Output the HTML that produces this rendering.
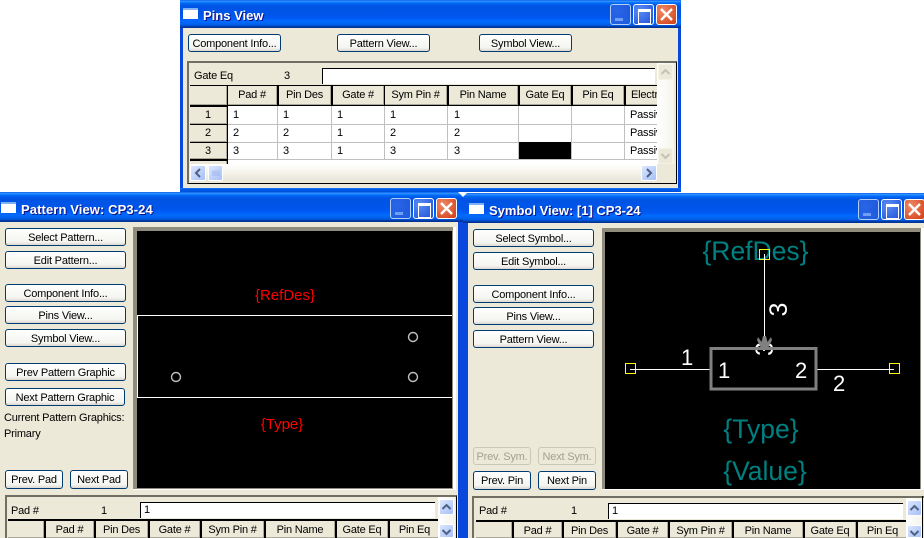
<!DOCTYPE html>
<html><head><meta charset="utf-8"><style>
html,body{margin:0;padding:0;background:#fff;width:924px;height:538px;overflow:hidden}
body{position:relative;font:11px/13px "Liberation Sans",sans-serif;color:#000;letter-spacing:-.2px}
svg{letter-spacing:0}
div{position:absolute;box-sizing:border-box;white-space:nowrap}
.fr{background:#0848dc}
.tb{background:linear-gradient(180deg,#0058ee 0,#3593ff 4%,#288eff 6%,#127dff 8%,#036ffc 10%,#0262ee 14%,#0057e5 20%,#0054e3 24%,#0055eb 56%,#005bf5 66%,#026afe 76%,#0062ef 86%,#0052d6 92%,#0040ab 94%,#003092 100%)}
.cl{background:#ece9d8}
.tt{color:#fff;font:bold 13px/16px "Liberation Sans",sans-serif;letter-spacing:0;text-shadow:1px 1px 0 #0f1089}
.ic{width:15px;height:11px;background:#fff;border-top:2px solid #7fb2f0}
.b{height:18px;border:1px solid #003c74;border-radius:3px;background:linear-gradient(#fff,#f4f4f0 80%,#dcd8ce);text-align:center;line-height:18px}
.d{border-color:#c9c7ba;color:#a1a192;background:#ece9d8}
.h{background:#ece9d8;text-align:center;line-height:19px;border-right:1px solid #aca899;border-bottom:1px solid #aca899;overflow:hidden}
.t{line-height:17px}
.w{background:#fff}
.v{background:#c0c0c0;width:1px}
.r{background:#c0c0c0;height:1px}
.bk{background:#000}
.wm,.wx,.wc{width:21px;height:21px;border:1px solid #fff;border-radius:3px}
.wm{background:radial-gradient(circle at 30% 30%,#3a6ee8,#2a55d0);opacity:.7}
.wx{background:radial-gradient(circle at 30% 30%,#5b8cf0,#1e50dc)}
.wc{background:radial-gradient(circle at 30% 30%,#ee8a68,#d23c12)}
.wm i{position:absolute;left:4px;top:13px;width:8px;height:3px;background:#9fb8f2}
.wx i{position:absolute;left:4px;top:4px;width:11px;height:11px;border:1px solid #fff;border-top:3px solid #fff}
.sb{width:15px;height:16px;border:1px solid #fff;border-radius:2px;background:linear-gradient(135deg,#dbe6fe,#a6c0f6);text-align:center}
.sd{background:#ece9d8;border-color:#f4f2e8}
</style></head><body>

<!-- PINS VIEW -->
<div class="fr" style="left:180px;top:0;width:501px;height:191px"></div>
<div class="tb" style="left:180px;top:0;width:501px;height:28px"></div>
<div class="tb" style="left:180px;top:188px;width:501px;height:4px"></div>
<div class="ic" style="left:183px;top:8px"></div>
<div class="tt" style="left:203px;top:8px">Pins View</div>
<div class="wm" style="left:610px;top:4px"><i></i></div>
<div class="wx" style="left:633px;top:4px"><i></i></div>
<div class="wc" style="left:656px;top:4px"><svg width="19" height="19" style="position:absolute;left:0;top:0"><path d="M4 4L15 15M15 4L4 15" stroke="#fff" stroke-width="2.4"/></svg></div>
<div class="cl" style="left:183px;top:28px;width:495px;height:160px"></div>
<div class="b" style="left:188px;top:34px;width:93px">Component Info...</div>
<div class="b" style="left:337px;top:34px;width:93px">Pattern View...</div>
<div class="b" style="left:479px;top:34px;width:93px">Symbol View...</div>
<div style="left:187px;top:61px;width:490px;height:123px;border:1px solid #000;border-top:2px solid #716f64;border-left:2px solid #716f64;background:#ece9d8"></div>
<div style="left:194px;top:70px">Gate Eq</div>
<div style="left:284px;top:70px">3</div>
<div class="w" style="left:322px;top:68px;width:333px;height:16px;border-left:1px solid #000;border-top:1px solid #000"></div>
<div class="bk" style="left:190px;top:85px;width:467px;height:21px"></div>
<div class="h" style="left:190px;top:86px;width:37px;height:19px"></div>
<div class="h" style="left:228px;top:86px;width:49px;height:19px">Pad #</div>
<div class="h" style="left:279px;top:86px;width:52px;height:19px">Pin Des</div>
<div class="h" style="left:333px;top:86px;width:51px;height:19px">Gate #</div>
<div class="h" style="left:385px;top:86px;width:62px;height:19px">Sym Pin #</div>
<div class="h" style="left:449px;top:86px;width:69px;height:19px">Pin Name</div>
<div class="h" style="left:520px;top:86px;width:51px;height:19px">Gate Eq</div>
<div class="h" style="left:573px;top:86px;width:51px;height:19px">Pin Eq</div>
<div class="h" style="left:626px;top:86px;width:31px;height:19px;text-align:left;padding-left:5px;border-right:0">Electrical</div>
<div class="w" style="left:228px;top:106px;width:429px;height:58px"></div>
<div class="r" style="left:228px;top:124px;width:429px"></div>
<div class="r" style="left:228px;top:142px;width:429px"></div>
<div class="r" style="left:228px;top:159px;width:429px"></div>
<div class="v" style="left:277px;top:106px;height:54px"></div>
<div class="v" style="left:331px;top:106px;height:54px"></div>
<div class="v" style="left:384px;top:106px;height:54px"></div>
<div class="v" style="left:447px;top:106px;height:54px"></div>
<div class="v" style="left:518px;top:106px;height:54px"></div>
<div class="v" style="left:571px;top:106px;height:54px"></div>
<div class="v" style="left:624px;top:106px;height:54px"></div>
<div class="bk" style="left:227px;top:85px;width:1px;height:79px"></div>
<div class="bk" style="left:190px;top:105px;width:37px;height:59px"></div>
<div class="h" style="left:190px;top:107px;width:37px;height:17px;line-height:16px">1</div>
<div class="h" style="left:190px;top:125px;width:37px;height:17px;line-height:17px">2</div>
<div class="h" style="left:190px;top:143px;width:37px;height:16px;line-height:16px">3</div>
<div class="h" style="left:190px;top:161px;width:37px;height:3px;border-bottom:0"></div>
<div class="t" style="left:233px;top:107px">1</div><div class="t" style="left:283px;top:107px">1</div><div class="t" style="left:337px;top:107px">1</div><div class="t" style="left:390px;top:107px">1</div><div class="t" style="left:454px;top:107px">1</div><div class="t" style="left:630px;top:107px;width:27px;overflow:hidden">Passive</div>
<div class="t" style="left:233px;top:125px">2</div><div class="t" style="left:283px;top:125px">2</div><div class="t" style="left:337px;top:125px">1</div><div class="t" style="left:390px;top:125px">2</div><div class="t" style="left:454px;top:125px">2</div><div class="t" style="left:630px;top:125px;width:27px;overflow:hidden">Passive</div>
<div class="t" style="left:233px;top:143px">3</div><div class="t" style="left:283px;top:143px">3</div><div class="t" style="left:337px;top:143px">1</div><div class="t" style="left:390px;top:143px">3</div><div class="t" style="left:454px;top:143px">3</div><div class="t" style="left:630px;top:143px;width:27px;overflow:hidden">Passive</div>
<div class="bk" style="left:519px;top:142px;width:52px;height:17px"></div>
<div style="left:190px;top:164px;width:467px;height:17px;background:linear-gradient(#fff,#f3f1e7 60%,#e8e6d8)"></div>
<div class="sb" style="left:190px;top:165px;height:16px;width:16px"><svg width="14" height="14" style="position:absolute;left:0;top:0"><path d="M9 3L5 7L9 11" fill="none" stroke="#4d6185" stroke-width="2"/></svg></div>
<div class="sb" style="left:208px;top:165px;height:16px;width:15px"><svg width="13" height="14" style="position:absolute;left:0;top:0"><path d="M4 4.500V10M6 4.500V10M8 4.500V10M10 4.500V10" stroke="#a0b4e8" stroke-width="1"/></svg></div>
<div class="sb" style="left:641px;top:165px;height:16px;width:16px"><svg width="14" height="14" style="position:absolute;left:0;top:0"><path d="M5 3L9 7L5 11" fill="none" stroke="#4d6185" stroke-width="2"/></svg></div>
<div style="left:657px;top:63px;width:17px;height:101px;background:linear-gradient(90deg,#fff,#f5f4ec)"></div>
<div class="sb sd" style="left:658px;top:64px"><svg width="13" height="14" style="position:absolute;left:0;top:0"><path d="M2.500 9L6.500 5L10.500 9" fill="none" stroke="#c4c2b3" stroke-width="2"/></svg></div>
<div class="sb sd" style="left:658px;top:148px"><svg width="13" height="14" style="position:absolute;left:0;top:0"><path d="M2.500 5L6.500 9L10.500 5" fill="none" stroke="#c4c2b3" stroke-width="2"/></svg></div>

<!-- PATTERN VIEW -->
<div class="fr" style="left:0;top:192px;width:463px;height:346px"></div>
<div class="tb" style="left:0;top:192px;width:463px;height:30px"></div>
<div class="ic" style="left:1px;top:202px"></div>
<div class="tt" style="left:21px;top:202px;letter-spacing:.1px">Pattern View: CP3-24</div>
<div class="wm" style="left:390px;top:198px"><i></i></div>
<div class="wx" style="left:413px;top:198px"><i></i></div>
<div class="wc" style="left:436px;top:198px"><svg width="19" height="19" style="position:absolute;left:0;top:0"><path d="M4 4L15 15M15 4L4 15" stroke="#fff" stroke-width="2.4"/></svg></div>
<div class="cl" style="left:0;top:222px;width:458px;height:316px"></div>
<div class="b" style="left:5px;top:228px;width:121px">Select Pattern...</div>
<div class="b" style="left:5px;top:251px;width:121px">Edit Pattern...</div>
<div class="b" style="left:5px;top:284px;width:121px">Component Info...</div>
<div class="b" style="left:5px;top:306px;width:121px">Pins View...</div>
<div class="b" style="left:5px;top:329px;width:121px">Symbol View...</div>
<div class="b" style="left:5px;top:363px;width:121px">Prev Pattern Graphic</div>
<div class="b" style="left:5px;top:388px;width:120px">Next Pattern Graphic</div>
<div style="left:4px;top:412px">Current Pattern Graphics:</div>
<div style="left:4px;top:428px">Primary</div>
<div class="b" style="left:5px;top:470px;width:58px;height:19px">Prev. Pad</div>
<div class="b" style="left:70px;top:470px;width:58px;height:19px">Next Pad</div>
<div style="left:133px;top:227px;width:323px;height:263px;background:#fff"></div>
<div style="left:133px;top:227px;width:320px;height:262px;background:#8f8c7d"></div>
<div class="bk" style="left:137px;top:231px;width:315px;height:257px"></div>
<svg width="924" height="538" style="position:absolute;left:0;top:0">
<rect x="137.500" y="315.500" width="320" height="82" fill="none" stroke="#fff"/>
<rect x="452" y="300" width="6" height="110" fill="#ece9d8"/>
<rect x="452" y="300" width="1" height="110" fill="#8f8c7d"/>
<rect x="453" y="300" width="3" height="110" fill="#fff"/>
<circle cx="176" cy="377" r="4.500" fill="none" stroke="#c0c0c0" stroke-width="1.400"/>
<circle cx="413" cy="337" r="4.500" fill="none" stroke="#c0c0c0" stroke-width="1.400"/>
<circle cx="413" cy="377" r="4.500" fill="none" stroke="#c0c0c0" stroke-width="1.400"/>
<text x="285" y="300" text-anchor="middle" fill="#f00" font-family="Liberation Sans" font-size="15">{RefDes}</text>
<text x="282" y="429" text-anchor="middle" fill="#f00" font-family="Liberation Sans" font-size="15">{Type}</text>
</svg>
<div style="left:5px;top:495px;width:452px;height:43px;border:1px solid #000;border-top:2px solid #716f64;border-left:2px solid #716f64;border-bottom:0;background:#ece9d8"></div>
<div style="left:11px;top:505px">Pad #</div>
<div style="left:101px;top:505px">1</div>
<div class="w" style="left:140px;top:502px;width:295px;height:16px;border-left:1px solid #000;border-top:1px solid #000;padding-left:3px;line-height:15px">1</div>
<div class="bk" style="left:8px;top:519px;width:431px;height:19px"></div>
<div class="h" style="left:8px;top:521px;width:36px;height:17px"></div>
<div class="h" style="left:46px;top:521px;width:48px;height:17px">Pad #</div>
<div class="h" style="left:96px;top:521px;width:52px;height:17px">Pin Des</div>
<div class="h" style="left:150px;top:521px;width:50px;height:17px">Gate #</div>
<div class="h" style="left:202px;top:521px;width:62px;height:17px">Sym Pin #</div>
<div class="h" style="left:266px;top:521px;width:69px;height:17px">Pin Name</div>
<div class="h" style="left:337px;top:521px;width:51px;height:17px">Gate Eq</div>
<div class="h" style="left:390px;top:521px;width:49px;height:17px;border-right:0">Pin Eq</div>
<div style="left:438px;top:497px;width:17px;height:41px;background:linear-gradient(90deg,#fff,#f5f4ec)"></div>
<div class="sb" style="left:439px;top:499px"><svg width="13" height="14" style="position:absolute;left:0;top:0"><path d="M2.500 9L6.500 5L10.500 9" fill="none" stroke="#4d6185" stroke-width="2"/></svg></div>
<div class="sb" style="left:439px;top:524px;height:14px"><svg width="13" height="14" style="position:absolute;left:0;top:0"><path d="M2.500 5L6.500 9L10.500 5" fill="none" stroke="#4d6185" stroke-width="2"/></svg></div>

<!-- SYMBOL VIEW -->
<div class="fr" style="left:463px;top:193px;width:461px;height:345px"></div>
<div class="tb" style="left:463px;top:193px;width:461px;height:30px"></div>
<svg width="12" height="6" style="position:absolute;left:458px;top:192px"><path d="M0 0H10L5 5Z" fill="#fff"/></svg>
<div class="ic" style="left:469px;top:203px"></div>
<div class="tt" style="left:489px;top:203px">Symbol View: [1] CP3-24</div>
<div class="wm" style="left:858px;top:199px"><i></i></div>
<div class="wx" style="left:881px;top:199px"><i></i></div>
<div class="wc" style="left:904px;top:199px"><svg width="19" height="19" style="position:absolute;left:0;top:0"><path d="M4 4L15 15M15 4L4 15" stroke="#fff" stroke-width="2.4"/></svg></div>
<div class="cl" style="left:468px;top:223px;width:456px;height:315px"></div>
<div class="b" style="left:473px;top:229px;width:121px">Select Symbol...</div>
<div class="b" style="left:473px;top:252px;width:121px">Edit Symbol...</div>
<div class="b" style="left:473px;top:285px;width:121px">Component Info...</div>
<div class="b" style="left:473px;top:307px;width:121px">Pins View...</div>
<div class="b" style="left:473px;top:330px;width:121px">Pattern View...</div>
<div class="b d" style="left:473px;top:447px;width:58px">Prev. Sym.</div>
<div class="b d" style="left:538px;top:447px;width:58px">Next Sym.</div>
<div class="b" style="left:473px;top:471px;width:58px;height:19px">Prev. Pin</div>
<div class="b" style="left:538px;top:471px;width:58px;height:19px">Next Pin</div>
<div style="left:602px;top:228px;width:322px;height:262px;background:#fff"></div>
<div style="left:602px;top:228px;width:319px;height:261px;background:#8f8c7d"></div>
<div class="bk" style="left:605px;top:232px;width:315px;height:257px"></div>
<svg width="924" height="538" style="position:absolute;left:0;top:0">
<text x="755.500" y="260" text-anchor="middle" fill="#008080" font-family="Liberation Sans" font-size="26.500">{RefDes}</text>
<text x="761" y="438" text-anchor="middle" fill="#008080" font-family="Liberation Sans" font-size="26.500">{Type}</text>
<text x="765" y="480" text-anchor="middle" fill="#008080" font-family="Liberation Sans" font-size="26.500">{Value}</text>
<rect x="759.500" y="249.500" width="10" height="10" fill="none" stroke="#ff0"/>
<rect x="625.500" y="363.500" width="10" height="10" fill="none" stroke="#ff0"/>
<rect x="889.500" y="363.500" width="10" height="10" fill="none" stroke="#ff0"/>
<path d="M764.500 254V337M630 369.500H710M817 369.500H894" stroke="#fff" fill="none"/>
<text transform="translate(787,316.500) rotate(-90)" fill="#fff" font-family="Liberation Sans" font-size="25">3</text>
<text transform="translate(773,356) rotate(-90)" fill="#fff" font-family="Liberation Sans" font-size="25">3</text>
<rect x="711" y="348.500" width="105" height="40.500" fill="none" stroke="#808080" stroke-width="3"/>
<path d="M758 337L761.500 342L763 336H766L767.500 342L771 337L772 340L768.500 347H760.500L757 340Z" fill="#808080"/>
<text x="681" y="365" fill="#fff" font-family="Liberation Sans" font-size="22">1</text>
<text x="718" y="378" fill="#fff" font-family="Liberation Sans" font-size="22">1</text>
<text x="795" y="378" fill="#fff" font-family="Liberation Sans" font-size="22">2</text>
<text x="833" y="391" fill="#fff" font-family="Liberation Sans" font-size="22">2</text>
</svg>
<div style="left:472px;top:496px;width:452px;height:42px;border-top:2px solid #716f64;border-left:2px solid #716f64;background:#ece9d8"></div>
<div style="left:479px;top:505px">Pad #</div>
<div style="left:571px;top:505px">1</div>
<div class="w" style="left:608px;top:503px;width:295px;height:16px;border-left:1px solid #000;border-top:1px solid #000;padding-left:3px;line-height:15px">1</div>
<div class="bk" style="left:476px;top:520px;width:431px;height:18px"></div>
<div class="h" style="left:476px;top:522px;width:36px;height:16px"></div>
<div class="h" style="left:514px;top:522px;width:48px;height:16px">Pad #</div>
<div class="h" style="left:564px;top:522px;width:52px;height:16px">Pin Des</div>
<div class="h" style="left:618px;top:522px;width:50px;height:16px">Gate #</div>
<div class="h" style="left:670px;top:522px;width:62px;height:16px">Sym Pin #</div>
<div class="h" style="left:734px;top:522px;width:69px;height:16px">Pin Name</div>
<div class="h" style="left:805px;top:522px;width:51px;height:16px">Gate Eq</div>
<div class="h" style="left:858px;top:522px;width:49px;height:16px;border-right:0">Pin Eq</div>
<div style="left:906px;top:498px;width:16px;height:40px;background:linear-gradient(90deg,#fff,#f5f4ec)"></div>
<div class="bk" style="left:922px;top:496px;width:1px;height:42px"></div>
<div class="sb" style="left:907px;top:500px"><svg width="13" height="14" style="position:absolute;left:0;top:0"><path d="M2.500 9L6.500 5L10.500 9" fill="none" stroke="#4d6185" stroke-width="2"/></svg></div>
<div class="sb" style="left:907px;top:525px;height:13px"><svg width="13" height="14" style="position:absolute;left:0;top:0"><path d="M2.500 5L6.500 9L10.500 5" fill="none" stroke="#4d6185" stroke-width="2"/></svg></div>
</body></html>
